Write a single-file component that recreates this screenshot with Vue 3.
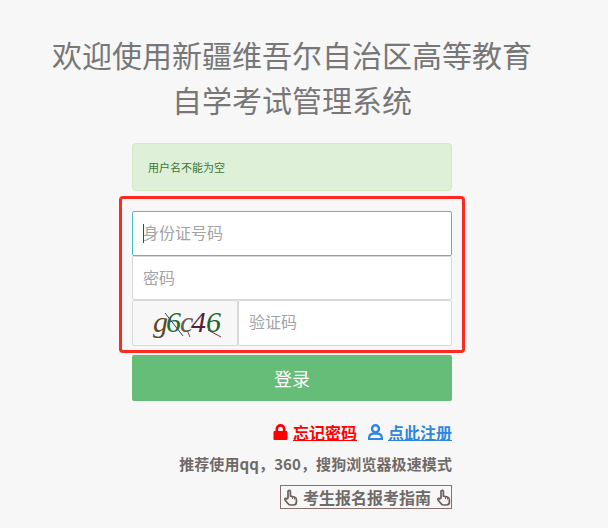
<template>
  <div class="login-page">
    <h1 class="title">欢迎使用新疆维吾尔自治区高等教育<br />自学考试管理系统</h1>

    <div class="login-box">
      <div class="alert">用户名不能为空</div>

      <form class="login-form" @submit.prevent>
        <div class="field-wrap">
          <input class="field field-focus" type="text" placeholder="身份证号码" />
          <span class="caret"></span>
        </div>
        <input class="field field-pass" type="password" placeholder="密码" />
        <div class="captcha-row">
          <div class="captcha-img">
            <svg width="104" height="44" viewBox="0 0 104 44">
              <text x="20" y="31" class="cap-text" fill="#5c4a1e">g</text>
              <text x="33" y="31" class="cap-text" fill="#1d6a2c">6</text>
              <text x="47" y="31" class="cap-text" fill="#6b5a50">c</text>
              <text x="58" y="31" class="cap-text" fill="#571d3c">4</text>
              <text x="73" y="31" class="cap-text" fill="#1d6429">6</text>
              <path d="M32 12 L50 35" stroke="#2a3f8f" fill="none" />
              <path d="M54 29 L57 36" stroke="#6b4a50" fill="none" />
              <path d="M75 29 L88 36" stroke="#7a2a44" fill="none" />
            </svg>
          </div>
          <input class="field captcha-input" type="text" placeholder="验证码" />
        </div>
        <div class="highlight"></div>
      </form>

      <button class="login-btn" type="button">登录</button>

      <div class="links">
        <a class="link link-red" href="#">
          <svg class="link-icon" width="15" height="16" viewBox="0 0 15 16">
            <path fill="#f00" d="M2.500 7V5a5 5 0 0 1 10 0v2h1a1 1 0 0 1 1 1v7a1 1 0 0 1-1 1h-12a1 1 0 0 1-1-1V8a1 1 0 0 1 1-1zm2.700 0h4.600V5a2.300 2.300 0 0 0-4.600 0z" />
          </svg>
          <span class="link-text">忘记密码</span>
        </a>
        <a class="link link-blue" href="#">
          <svg class="link-icon" width="15" height="16" viewBox="0 0 15 16">
            <circle cx="7.500" cy="4.800" r="3.500" fill="none" stroke="#2e86de" stroke-width="2.400" />
            <path fill="none" stroke="#2e86de" stroke-width="2.200" d="M1 15c0-3 1.500-5 3.800-5.300h5.400C12.500 10 14 12 14 15z" />
          </svg>
          <span class="link-text">点此注册</span>
        </a>
      </div>

      <p class="browser-tip">推荐使用qq，360，搜狗浏览器极速模式</p>

      <div class="guide-row">
        <a class="guide" href="#">
          <svg class="hand" width="15" height="17" viewBox="0 0 15 17">
            <path fill="none" stroke="#6b5f5b" stroke-width="1.700" d="M5 9V2.500a1.200 1.200 0 0 1 2.400 0V7l4 1c1.500.4 2 1.200 2 2.500V13c0 2-1.500 3-3 3H7.500c-1.500 0-2.300-.8-3-2L2 11c-.7-1.200.8-2.200 1.800-1.200z" />
            <path fill="none" stroke="#6b5f5b" d="M9.500 7.500V10M11.500 8v2.500" />
          </svg>
          <span>考生报名报考指南</span>
          <svg class="hand" width="15" height="17" viewBox="0 0 15 17">
            <path fill="none" stroke="#6b5f5b" stroke-width="1.700" d="M5 9V2.500a1.200 1.200 0 0 1 2.400 0V7l4 1c1.500.4 2 1.200 2 2.500V13c0 2-1.500 3-3 3H7.500c-1.500 0-2.300-.8-3-2L2 11c-.7-1.200.8-2.200 1.800-1.200z" />
            <path fill="none" stroke="#6b5f5b" d="M9.500 7.500V10M11.500 8v2.500" />
          </svg>
        </a>
      </div>
    </div>
  </div>
</template>

<script setup>
</script>

<style>
html,
body {
  background: #f7f7f7;
}
</style>

<style scoped>
.login-page {
  width: 608px;
  height: 528px;
  overflow: hidden;
  background: #f7f7f7;
  font-family: "Noto Sans CJK SC", "Liberation Sans", sans-serif;
  color: #676a6c;
}

.title {
  margin: 0;
  padding-top: 32px;
  width: 584px;
  font-size: 30px;
  line-height: 45px;
  font-weight: 400;
  text-align: center;
  color: #777;
}

.login-box {
  width: 320px;
  margin: 21px 0 0 132px;
}

.alert {
  height: 48px;
  box-sizing: border-box;
  padding-left: 15px;
  font-size: 11px;
  line-height: 46px;
  color: #3c763d;
  background: #dff0d8;
  border: 1px solid #d6e9c6;
  border-radius: 4px;
}

.login-form {
  position: relative;
  margin-top: 20px;
}

.field-wrap {
  position: relative;
}

.field {
  display: block;
  width: 100%;
  height: 45px;
  box-sizing: border-box;
  padding: 0 10px 4px;
  font-family: inherit;
  font-size: 16px;
  color: #555;
  background: #fff;
  border: 1px solid #d9d9d9;
  border-radius: 2px;
  outline: none;
}

.field::placeholder {
  color: #a3a3a3;
  opacity: 1;
}

.field-focus {
  border-color: #45c1c1;
}

.caret {
  position: absolute;
  left: 11px;
  top: 13px;
  width: 1px;
  height: 19px;
  background: #444;
}

.field-pass {
  height: 44px;
  padding-bottom: 2px;
}

.captcha-row {
  display: flex;
  height: 46px;
}

.captcha-img {
  width: 106px;
  box-sizing: border-box;
  background: #f7f7f7;
  border: 1px solid #d9d9d9;
  border-radius: 2px 0 0 2px;
}

.captcha-img svg {
  display: block;
}

.cap-text {
  font-family: "Liberation Serif", serif;
  font-style: italic;
  font-size: 30px;
}

.captcha-input {
  flex: 1;
  width: auto;
  height: 46px;
  border-left: 1px solid #d9d9d9;
}

.highlight {
  position: absolute;
  left: -13px;
  top: -15px;
  width: 346px;
  height: 157px;
  box-sizing: border-box;
  border: 3px solid #ff2a1f;
  border-radius: 4px;
  pointer-events: none;
}

.login-btn {
  display: block;
  width: 100%;
  height: 46px;
  margin-top: 9px;
  padding-bottom: 2px;
  font-family: inherit;
  font-size: 18px;
  color: #fff;
  background: #65bd77;
  border: none;
  border-radius: 2px;
}

.links {
  display: flex;
  justify-content: flex-end;
  gap: 11px;
  margin-top: 20px;
  font-size: 16px;
  line-height: 22px;
  font-weight: 700;
}

.link {
  display: flex;
  align-items: center;
  gap: 5px;
  text-decoration: underline;
}

.link-red {
  color: #f00;
}

.link-blue {
  color: #2e86de;
}

.browser-tip {
  margin: 10px 0 0;
  font-size: 15px;
  line-height: 22px;
  font-weight: 700;
  letter-spacing: 0.1px;
  text-align: right;
  color: #6f6a68;
}

.guide-row {
  display: flex;
  justify-content: flex-end;
  margin-top: 10px;
}

.guide {
  display: flex;
  align-items: center;
  gap: 5px;
  height: 24px;
  box-sizing: border-box;
  padding: 0 0 0 2px;
  font-size: 16px;
  font-weight: 700;
  color: #6f6a68;
  text-decoration: none;
  border: 1px solid #8a6d6d;
}
</style>
